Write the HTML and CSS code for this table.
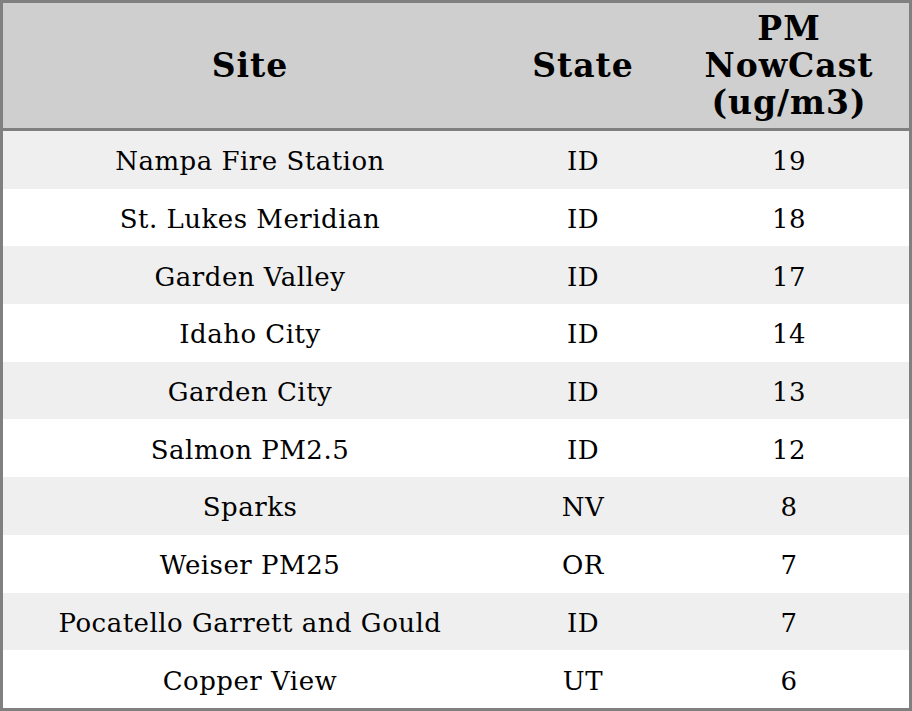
FILE: index.html
```html
<!DOCTYPE html>
<html>
<head>
<meta charset="utf-8">
<link rel="stylesheet" href="styles.css">
</head>
<body>
<table class="data">
  <colgroup>
    <col class="c-site">
    <col class="c-state">
    <col class="c-pm">
  </colgroup>
  <thead>
    <tr><th>Site</th><th>State</th><th>PM<br>NowCast<br>(ug/m3)</th></tr>
  </thead>
  <tbody>
    <tr><td>Nampa Fire Station</td><td>ID</td><td>19</td></tr>
    <tr><td>St. Lukes Meridian</td><td>ID</td><td>18</td></tr>
    <tr><td>Garden Valley</td><td>ID</td><td>17</td></tr>
    <tr><td>Idaho City</td><td>ID</td><td>14</td></tr>
    <tr><td>Garden City</td><td>ID</td><td>13</td></tr>
    <tr><td>Salmon PM2.5</td><td>ID</td><td>12</td></tr>
    <tr><td>Sparks</td><td>NV</td><td>8</td></tr>
    <tr><td>Weiser PM25</td><td>OR</td><td>7</td></tr>
    <tr><td>Pocatello Garrett and Gould</td><td>ID</td><td>7</td></tr>
    <tr><td>Copper View</td><td>UT</td><td>6</td></tr>
  </tbody>
</table>
</body>
</html>
```
FILE: styles.css
```css
html, body {
  margin: 0;
  padding: 0;
  background: #ffffff;
}
.data {
  width: 912px;
  height: 711px;
  border: 3px solid #808080;
  border-collapse: separate;
  border-spacing: 0;
  font-family: "DejaVu Serif", serif;
  color: #000;
  table-layout: fixed;
}
.c-site { width: 494px; }
.c-state { width: 172px; }
.c-pm { width: 240px; }
.data th {
  background: #cfcfcf;
  font-size: 33px;
  font-weight: bold;
  letter-spacing: 1px;
  line-height: 37px;
  height: 125px;
  padding: 0;
  text-align: center;
  vertical-align: middle;
  border-bottom: 3px solid #808080;
}
.data td {
  font-size: 26px;
  letter-spacing: 0.5px;
  padding: 3px 0 0 0;
  text-align: center;
  vertical-align: middle;
}
.data tbody tr:nth-child(odd) td {
  background: #efefef;
}
.data tbody tr:nth-child(even) td {
  background: #ffffff;
}
```
